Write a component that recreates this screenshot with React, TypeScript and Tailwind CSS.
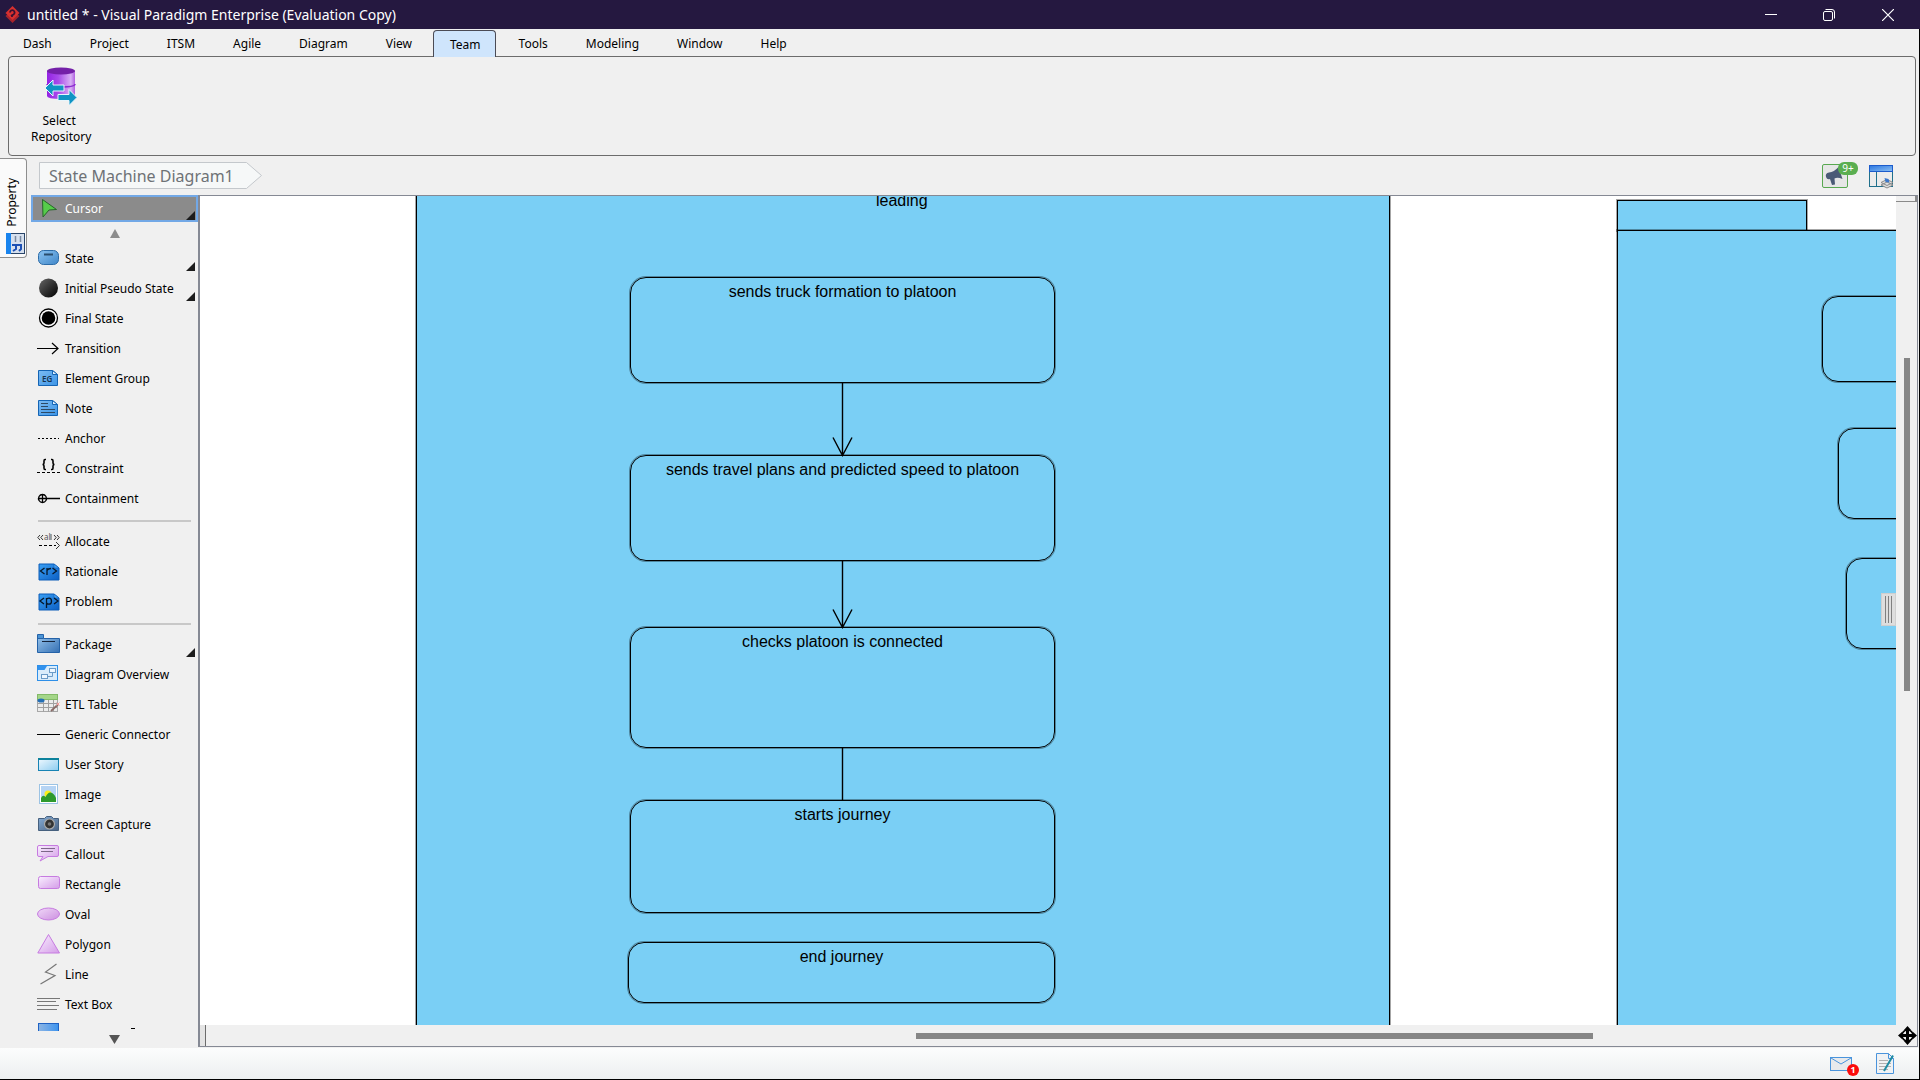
import type { ReactNode } from "react";

const menus = ["Dash", "Project", "ITSM", "Agile", "Diagram", "View", "Team", "Tools", "Modeling", "Window", "Help"];

function Svg({ children }: { children: ReactNode }) {
  return (
    <svg width="24" height="24" viewBox="0 0 24 24" fill="none" className="shrink-0" aria-hidden="true">
      {children}
    </svg>
  );
}

const icons: Record<string, ReactNode> = {
  State: (
    <>
      <rect x="1.500" y="3.500" width="20" height="14" rx="5" fill="url(#gState)" stroke="#2d6ca8" />
      <path d="M7 7.500h9" stroke="#2b4d6c" strokeWidth="2" />
    </>
  ),
  "Initial Pseudo State": <circle cx="11.500" cy="11" r="9.500" fill="url(#gBall)" />,
  "Final State": (
    <>
      <circle cx="11.500" cy="11" r="9" fill="#fff" stroke="#000" strokeWidth="1.300" />
      <circle cx="11.500" cy="11" r="6.800" fill="#000" />
    </>
  ),
  Transition: <path d="M0 11.500h21M15 6l6 5.500-6 5.500" stroke="#000" strokeWidth="1.200" />,
  "Element Group": (
    <>
      <path d="M1.500 3.500h14l5 4v11h-19z" fill="url(#gNote)" stroke="#1464b4" />
      <path d="M15.500 3.500v4h5z" fill="#dceeff" stroke="#1464b4" />
      <text x="5" y="15" fontSize="8" fontWeight="600" fontFamily="Noto Sans" fill="#16324e">EG</text>
    </>
  ),
  Note: (
    <>
      <path d="M1.500 3.500h14l5 4v11h-19z" fill="url(#gNote)" stroke="#1464b4" />
      <path d="M15.500 3.500v4h5z" fill="#dceeff" stroke="#1464b4" />
      <path d="M4 6.500h7M4 9.500h7M4 12.500h14M4 15.500h14" stroke="#2d4a66" />
    </>
  ),
  Anchor: <path d="M1 11.500h21" stroke="#000" strokeDasharray="2 2" />,
  Constraint: (
    <>
      <path d="M9 2.500H8q-1 0-1 1.500v2q0 1.500-1.500 1.500Q7 7.500 7 9v2q0 1.500 1 1.500h1M14 2.500h1q1 0 1 1.500v2q0 1.500 1.500 1.500Q16 7.500 16 9v2q0 1.500-1 1.500h-1" stroke="#000" strokeWidth="1.600" />
      <path d="M0 15.500h23" stroke="#000" strokeDasharray="3 2" />
    </>
  ),
  Containment: <path d="M5.500 7.500a4 4 0 1 0 .01 0M5.500 7.500v8M1.500 11.500H23" stroke="#000" strokeWidth="1.300" />,
  Allocate: (
    <>
      <path d="M3 5L.8 7.500 3 10M6 5L3.800 7.500 6 10M17 5l2.200 2.500L17 10M20 5l2.200 2.500L20 10" stroke="#333" />
      <text x="7" y="10" fontSize="8" fontFamily="Noto Sans" fill="#555">al</text>
      <path d="M14 4v6" stroke="#555" />
      <path d="M2 15.500h17" stroke="#000" strokeDasharray="3 2" />
      <path d="M19 12l3.500 3.500L19 19" stroke="#333" />
    </>
  ),
  Rationale: (
    <>
      <path d="M2 4h15l5 4v12H2z" fill="url(#gDeep)" stroke="#0d5cb8" />
      <path d="M17 4v4h5z" fill="#4aa3ef" stroke="#0d5cb8" strokeWidth=".6" />
      <path d="M7.500 8l-4 3 4 3M15.500 8l4 3-4 3M10 15V8M10 10.500Q11 8.500 14 8.500" stroke="#06182c" strokeWidth="1.300" />
    </>
  ),
  Problem: (
    <>
      <path d="M2 4h15l5 4v12H2z" fill="url(#gDeep)" stroke="#0d5cb8" />
      <path d="M17 4v4h5z" fill="#4aa3ef" stroke="#0d5cb8" strokeWidth=".6" />
      <path d="M7 8l-4 3 4 3M17 8l4 3-4 3M9.500 18V8M9.500 9.500Q10 8.200 12 8.200q2.500 0 2.500 3t-2.500 3q-2 0-2.500-1.500" stroke="#06182c" strokeWidth="1.300" />
    </>
  ),
  Package: (
    <>
      <path d="M.5 1.500h6v4h16v14H.5z" fill="url(#gPkg)" stroke="#2462a8" />
      <path d="M1 2h5v3.500H1z" fill="#4c94d4" />
      <path d="M.5 5.500h6" stroke="#2462a8" />
      <path d="M5 8.500h13" stroke="#14243c" />
    </>
  ),
  "Diagram Overview": (
    <>
      <rect x=".5" y="2.500" width="20" height="15" fill="#d9ecfb" stroke="#2e8fe8" />
      <path d="M1 3h9L7.500 7H1z" fill="#3192ee" />
      <rect x="12.500" y="5.500" width="6" height="4" fill="#eef7ff" stroke="#6c9cc8" />
      <rect x="4.500" y="11.500" width="6" height="4" fill="#eef7ff" stroke="#6c9cc8" />
      <path d="M11 13.500h4.500v-4" stroke="#6c9cc8" />
    </>
  ),
  "ETL Table": (
    <>
      <rect x=".5" y="1.500" width="20" height="17" fill="#ececec" stroke="#a8a8a8" />
      <rect x=".5" y="1.500" width="20" height="5" fill="#a4d688" stroke="#83ba68" />
      <path d="M1 10.500h19M1 14.500h19M6.500 7v12M11.500 7v12M16.500 7v12" stroke="#a0a0a0" />
      <ellipse cx="4" cy="7.500" rx="3.500" ry="2" fill="#256fb5" />
      <path d="M14 18l7-6.500" stroke="#896b67" strokeWidth="1.800" />
      <path d="M19.500 9.500l3 3M22.500 9.500l-3 3" stroke="#f09a9a" />
    </>
  ),
  "Generic Connector": <path d="M0 11.500h23" stroke="#000" />,
  "User Story": (
    <>
      <rect x="1.500" y="5.500" width="20" height="12" fill="url(#gStory)" stroke="#1883b4" />
      <path d="M1 6h21" stroke="#0d829c" strokeWidth="2" />
    </>
  ),
  Image: (
    <>
      <rect x="2.500" y="1.500" width="18" height="19" fill="#fff" stroke="#9cc3e4" />
      <rect x="4" y="3" width="15" height="16" fill="#b6d4f4" />
      <circle cx="11" cy="11" r="3.500" fill="#fbef1c" />
      <path d="M4 19v-4q2-4 4.500-1Q11 9 13.500 9.500 17 10 19 15v4z" fill="#2e9a2c" />
    </>
  ),
  "Screen Capture": (
    <>
      <path d="M1.500 5.500h6l2-2h5l2 2h5v12h-20z" fill="url(#gCam)" stroke="#46607e" />
      <circle cx="12.500" cy="11" r="5" fill="#333" stroke="#aaa" strokeWidth="1.200" />
      <circle cx="12.500" cy="11" r="1.800" fill="#777" />
    </>
  ),
  Callout: (
    <>
      <path d="M2 2.500h18q1.500 0 1.500 1.500v8q0 1.500-1.500 1.500h-9L3 18l3-4.500H2Q.5 13.500.5 12V4Q.5 2.500 2 2.500z" fill="url(#gPink)" stroke="#c67be0" />
      <path d="M4 5.500h14M4 8.500h12" stroke="#7d6688" />
    </>
  ),
  Rectangle: <rect x="1.500" y="3.500" width="21" height="12" rx="2" fill="url(#gPink)" stroke="#c67be0" />,
  Oval: <ellipse cx="11.500" cy="11" rx="11" ry="6" fill="url(#gOval)" stroke="#c67be0" />,
  Polygon: <path d="M11.500 1.500l11 18.500H.8z" fill="url(#gPink)" stroke="#c67be0" />,
  Line: <path d="M19.500 1L8.500 9l9.500 3.500L3.500 21" stroke="#777" strokeWidth="1.200" />,
  "Text Box": <path d="M0 5.500h23M0 8.500h19M0 12.500h22M0 16.500h20" stroke="#777" />,
};

const groups: { name: string; more?: boolean }[][] = [
  [
    { name: "State", more: true },
    { name: "Initial Pseudo State", more: true },
    { name: "Final State" },
    { name: "Transition" },
    { name: "Element Group" },
    { name: "Note" },
    { name: "Anchor" },
    { name: "Constraint" },
    { name: "Containment" },
  ],
  [{ name: "Allocate" }, { name: "Rationale" }, { name: "Problem" }],
  [
    { name: "Package", more: true },
    { name: "Diagram Overview" },
    { name: "ETL Table" },
    { name: "Generic Connector" },
    { name: "User Story" },
    { name: "Image" },
    { name: "Screen Capture" },
    { name: "Callout" },
    { name: "Rectangle" },
    { name: "Oval" },
    { name: "Polygon" },
    { name: "Line" },
    { name: "Text Box" },
  ],
];

function Gradients() {
  const list: [string, string, string][] = [
    ["gState", "#8cc4f2", "#3f86c8"],
    ["gBall", "#666666", "#000000"],
    ["gNote", "#7cbcf4", "#3c94e6"],
    ["gDeep", "#3aa0f4", "#0c5fc4"],
    ["gPkg", "#9cc8ee", "#3470b4"],
    ["gStory", "#f0f9ff", "#8cccf0"],
    ["gCam", "#86aed8", "#4c6484"],
    ["gPink", "#faf0ff", "#d49ce8"],
    ["gOval", "#f0d8f8", "#cc90e0"],
    ["gBar", "#2a76e0", "#8cc0f4"],
  ];
  return (
    <svg className="absolute size-0" aria-hidden="true">
      <defs>
        {list.map(([id, from, to]) => (
          <linearGradient key={id} id={id} x1="0" y1="0" x2="1" y2="1">
            <stop offset="0" stopColor={from} />
            <stop offset="1" stopColor={to} />
          </linearGradient>
        ))}
        <linearGradient id="gDb" x1="0" x2="1">
          <stop offset="0" stopColor="#9422e4" />
          <stop offset=".4" stopColor="#a84aea" />
          <stop offset=".85" stopColor="#d8b0f4" />
          <stop offset="1" stopColor="#b060e0" />
        </linearGradient>
      </defs>
    </svg>
  );
}

function Corner({ place }: { place: string }) {
  return (
    <svg width="9" height="9" viewBox="0 0 9 9" className={"absolute " + place} aria-hidden="true">
      <path d="M9 0v9H0z" fill="#1c1c1c" />
    </svg>
  );
}

function TitleBar() {
  return (
    <header className="flex h-[29px] shrink-0 items-center bg-[#251840] pl-[5px] text-white">
      <svg width="15" height="17" viewBox="0 0 15 17" aria-hidden="true">
        <path d="M7.500 4l7 6-7 7-7-7z" fill="#a8242c" />
        <path d="M7.500 0l7 7-7 7-7-7z" fill="#d8302f" />
        <path d="M7 11V8.500M5 6.500a2.300 2.300 0 1 1 3.500 2L6 10" stroke="#3a1230" strokeWidth="1.800" fill="none" />
      </svg>
      <h1 className="ml-[7px] flex-1 text-sm">untitled * - Visual Paradigm Enterprise (Evaluation Copy)</h1>
      <button aria-label="Minimize" className="flex h-full w-[58px] items-center justify-center">
        <svg width="12" height="12" viewBox="0 0 12 12"><path d="M0 5.500h12" stroke="#fff" /></svg>
      </button>
      <button aria-label="Restore" className="flex h-full w-[58px] items-center justify-center">
        <svg width="12" height="12" viewBox="0 0 12 12" fill="none" stroke="#fff">
          <rect x=".5" y="2.500" width="9" height="9" rx="1.500" />
          <path d="M2.500.5H9q2.500 0 2.500 2.500v6.500" />
        </svg>
      </button>
      <button aria-label="Close" className="flex h-full w-[60px] items-center justify-center">
        <svg width="12" height="12" viewBox="0 0 12 12"><path d="M0 0l12 12M12 0L0 12" stroke="#fff" strokeWidth="1.200" /></svg>
      </button>
      <div className="w-[2px]" />
    </header>
  );
}

function Ribbon() {
  return (
    <>
      <nav className="flex h-[27px] shrink-0 items-end gap-[6px] pl-[6px]">
        {menus.map((m) =>
          m === "Team" ? (
            <button key={m} className="relative z-10 -mb-px h-[27px] rounded-t-sm border border-b-0 border-[#4b4b55] bg-[#cfe5fc] pt-[2px] pr-[14px] pl-4">
              {m}
            </button>
          ) : (
            <button key={m} className="h-[26px] border border-transparent pt-[2px] pr-[14px] pl-4">
              {m}
            </button>
          ),
        )}
      </nav>
      <section aria-label="Team" className="mr-[3px] ml-2 flex h-[100px] shrink-0 items-start rounded border border-[#6c6c6c] pt-2 pl-[22px]">
        <button className="flex flex-col items-center text-center leading-4">
          <svg width="34" height="40" viewBox="0 0 34 40" className="mb-2" aria-hidden="true">
            <path d="M3 6v25q0 3 14 3t14-3V6z" fill="url(#gDb)" />
            <ellipse cx="17" cy="6" rx="14" ry="3.500" fill="#7420a8" />
            <path d="M3 19q0 3 14 3t14-3" stroke="#8c2cd0" fill="none" strokeWidth="1.500" />
            <path d="M1 23l8-8v5h11v6H9v5z" fill="#1094c4" stroke="#e8f6fc" />
            <path d="M33 32.500l-8-8v5H14v6h11v5z" fill="#1094c4" stroke="#e8f6fc" />
          </svg>
          <span className="pr-1">Select</span>
          <span>Repository</span>
        </button>
      </section>
    </>
  );
}

function Palette() {
  return (
    <aside aria-label="Diagram palette" className="flex w-[167px] shrink-0 flex-col">
      <button className="relative flex h-[27px] shrink-0 items-center border-2 border-[#72a8e6] bg-[#8b8b8b] pl-1 text-white">
        <Svg>
          <path d="M5.500 2.500l14 10-7.500.5-6 7z" fill="#56cc4a" stroke="#27662a" />
        </Svg>
        <span className="ml-1">Cursor</span>
        <Corner place="right-px bottom-0" />
      </button>
      <button aria-label="Scroll up" className="flex h-[22px] shrink-0 items-center justify-center">
        <svg width="10" height="9" viewBox="0 0 10 9"><path d="M5 0l5 9H0z" fill="#8c8c8c" /></svg>
      </button>
      <div className="min-h-0 flex-1 overflow-hidden">
        {groups.map((g, i) => (
          <div key={i}>
            {i > 0 && (
              <div className="flex h-[13px] items-center">
                <hr className="mx-[7px] flex-1 border-t-2 border-[#c8c8c8]" />
              </div>
            )}
            {g.map((it) => (
              <button key={it.name} className="relative flex h-[30px] w-full items-center pl-[6px] text-left">
                <Svg>{icons[it.name]}</Svg>
                <span className="ml-1">{it.name}</span>
                {it.more && <Corner place="right-[3px] bottom-[3px]" />}
              </button>
            ))}
          </div>
        ))}
        <div className="flex items-start pt-[3px] pl-[7px]">
          <div className="h-5 w-[21px] border border-[#1f62c4] bg-linear-to-r from-[#8ab4e4] to-[#3c94ee]" />
          <div className="mt-[5px] ml-[72px] h-px w-1 bg-black" />
        </div>
      </div>
      <button aria-label="Scroll down" className="flex h-4 shrink-0 items-center justify-center">
        <svg width="11" height="9" viewBox="0 0 11 9"><path d="M0 0h11L5.500 9z" fill="#555" /></svg>
      </button>
    </aside>
  );
}

const line = "absolute border border-black shadow-[0_0_0_1px_rgba(0,0,0,0.35)]";

const states = [
  { text: "sends truck formation to platoon", pos: "left-[430px] top-[81px] h-[106px] w-[425px]" },
  { text: "sends travel plans and predicted speed to platoon", pos: "left-[430px] top-[259px] h-[106px] w-[425px]" },
  { text: "checks platoon is connected", pos: "left-[430px] top-[431px] h-[121px] w-[425px]" },
  { text: "starts journey", pos: "left-[430px] top-[604px] h-[113px] w-[425px]" },
  { text: "end journey", pos: "left-[428px] top-[746px] h-[61px] w-[427px]" },
  { text: "", pos: "left-[1622px] top-[100px] h-[86px] w-[425px]" },
  { text: "", pos: "left-[1638px] top-[232px] h-[91px] w-[425px]" },
  { text: "", pos: "left-[1646px] top-[362px] h-[91px] w-[425px]" },
];

function Canvas() {
  return (
    <main className="relative min-w-0 flex-1 overflow-hidden bg-white font-['Liberation_Sans',sans-serif] text-base text-black">
      <div className={line + " -top-10 left-[216px] h-[900px] w-[974px] bg-[#7acff5]"} />
      <div className={line + " top-[4px] left-[1417px] h-[31px] w-[190px] bg-[#7acff5]"} />
      <div className={line + " top-[34px] left-[1417px] h-[900px] w-[600px] bg-[#7acff5]"} />
      <p className="absolute -top-[5px] left-[676px] leading-5">leading</p>
      {states.map((s, i) => (
        <div key={i} className={line + " rounded-2xl pt-1 text-center leading-5 " + s.pos}>
          {s.text}
        </div>
      ))}
      <svg width="30" height="460" viewBox="0 0 30 460" fill="none" stroke="#000" strokeWidth="1.400" className="absolute top-[180px] left-[628px]" aria-hidden="true">
        <path d="M14.500 7v72M5 61.500l9.500 18 9.500-18M14.500 185v66M5 233.500l9.500 18 9.500-18M14.500 372v53" />
      </svg>
      <button aria-label="Open side panel" className="absolute top-[397px] right-0 flex h-[33px] w-[15px] justify-center gap-[2px] border border-[#cfcfcf] bg-[#dedede] py-[2px]">
        <span className="w-px bg-[#808080]" />
        <span className="w-px bg-[#808080]" />
        <span className="w-px bg-[#808080]" />
      </button>
    </main>
  );
}

function Breadcrumb() {
  return (
    <div className="flex h-[39px] shrink-0 items-center pr-6">
      <button className="relative ml-2 flex h-[27px] w-[223px] items-center pl-[10px] text-base text-[#6e7276]">
        <svg width="223" height="27" viewBox="0 0 223 27" className="absolute top-0 left-0" aria-hidden="true">
          <path d="M.5.500h207l15 13-15 13H.5z" fill="#f6f8f8" stroke="#c4c8cc" />
        </svg>
        <span className="relative">State Machine Diagram1</span>
      </button>
      <div className="flex-1" />
      <button aria-label="Announcements" className="relative mr-[11px] h-[26px] w-9">
        <svg width="36" height="26" viewBox="0 0 36 26" aria-hidden="true">
          <rect x=".5" y="1.500" width="25" height="23" rx="1.500" fill="#e6e6e6" stroke="#58a850" />
          <path d="M4 14q-1-4 3-4.500 5-.5 9.500-5.500l4 12q-5-2-8-.500l.5 6-3 .5-2-6Q5 17 4 14z" fill="#4a5a76" />
        </svg>
        <span className="absolute -top-px left-4 flex h-[13px] w-5 items-center justify-center rounded-md bg-[#5aae50] text-[10px] leading-none text-white">9+</span>
      </button>
      <button aria-label="Panels">
        <svg width="26" height="26" viewBox="0 0 26 26" fill="none" aria-hidden="true">
          <rect x=".5" y="2.500" width="23" height="21" fill="#ececec" stroke="#20708c" />
          <rect x=".5" y="2.500" width="23" height="6" fill="url(#gBar)" stroke="#1c5ccc" />
          <path d="M7.500 9v14" stroke="#20708c" />
          <path d="M12 22l6-3 6 3-6 3zM12 19.500l6-3 6 3-6 3z" fill="#e0e0e0" stroke="#8a8a8a" />
          <path d="M15.500 15l4 1 1 3.500-4-.5z" fill="#3c78cc" />
        </svg>
      </button>
    </div>
  );
}

export default function App() {
  return (
    <div className="flex h-screen flex-col overflow-hidden border-b border-black bg-[#f0f0f0] font-['Noto_Sans',sans-serif] text-xs text-black">
      <Gradients />
      <TitleBar />
      <div className="flex min-h-0 flex-1 flex-col border-r border-black">
        <Ribbon />
        <div className="flex min-h-0 flex-1">
          <div className="w-[31px] shrink-0 pt-[2px]">
            <button className="flex h-[100px] w-[27px] flex-col items-center justify-end rounded-r border border-l-0 border-[#8e8e8e] bg-[#fafafa] pb-[3px]">
              <span className="mr-[3px] mb-[6px] rotate-180 [writing-mode:vertical-rl]">Property</span>
              <svg width="19" height="21" viewBox="0 0 19 21" className="ml-1 shrink-0" aria-hidden="true">
                <rect x=".5" y=".5" width="18" height="20" fill="#d6e0ee" stroke="#284468" />
                <path d="M0 0h5v21H0z" fill="#1a84ee" />
                <path d="M9.500 3v6M14.500 3v6" stroke="#7888a0" strokeWidth="1.500" />
                <path d="M6 12h4v4l-3 2M11 12h4v4l-2 2" stroke="#1c50b4" strokeWidth="2" fill="none" />
              </svg>
            </button>
          </div>
          <div className="flex min-w-0 flex-1 flex-col">
            <Breadcrumb />
            <div className="flex min-h-0 flex-1 pb-px">
              <Palette />
              <div className="mr-px flex min-w-0 flex-1 flex-col border border-l-2 border-[#858994]">
                <div className="flex min-h-0 flex-1">
                  <Canvas />
                  <div className="flex w-[21px] shrink-0 flex-col items-center">
                    <div className="mb-[156px] h-[6px] w-full border-r-2 border-b border-[#8a8a8a]" />
                    <div className="h-[333px] w-[6px] bg-[#868686]" />
                  </div>
                </div>
                <div className="flex h-[21px] shrink-0 items-center">
                  <div className="h-full w-[6px] border-r border-[#6c6c6c] bg-[#e4e4e4]" />
                  <div className="flex-[710]" />
                  <div className="h-[6px] flex-[678] bg-[#868686]" />
                  <div className="flex-[305]" />
                  <svg width="19" height="19" viewBox="0 0 19 19" className="shrink-0" aria-hidden="true">
                    <path d="M9.500 0l4 4.500h-2.500V8h3.500V5.500L19 9.500l-4.500 4V11H11v3.500h2.500L9.500 19l-4-4.500H8V11H4.500v2.500L0 9.500l4.500-4V8H8V4.500H5.500z" fill="#000" />
                    <circle cx="9.500" cy="9.500" r="5.500" stroke="#000" strokeWidth="1.500" fill="none" />
                  </svg>
                </div>
              </div>
            </div>
          </div>
        </div>
        <footer className="flex h-[31px] shrink-0 items-center justify-end bg-linear-to-b from-[#fcfdfd] to-[#eceff0] pr-[24px]">
          <button aria-label="Messages, 1 unread" className="relative mr-[15px] h-5 w-[31px]">
            <svg width="23" height="15" viewBox="0 0 23 15" fill="none" className="absolute top-[3px] left-0" aria-hidden="true">
              <rect x=".5" y=".5" width="21" height="13" fill="#e8eaec" stroke="#4a94dc" />
              <path d="M1 1l10 6 10-6" stroke="#4a94dc" />
            </svg>
            <span className="absolute top-[10px] left-[17px] flex size-3 items-center justify-center rounded-full bg-[#fa0c0c] text-[9px] font-bold leading-none text-white">1</span>
          </button>
          <button aria-label="Edit document">
            <svg width="19" height="22" viewBox="0 0 19 22" fill="none" aria-hidden="true">
              <path d="M.5.500h12l5 5v15H.5z" fill="#f0f2f4" stroke="#4a94dc" />
              <path d="M12.500.5v5h5" stroke="#4a94dc" />
              <path d="M3 7.500h9M3 10.500h12M3 13.500h12M3 16.500h9" stroke="#b0b0b0" />
              <path d="M17 2.500L8 18" stroke="#208ca4" strokeWidth="2" />
            </svg>
          </button>
        </footer>
      </div>
    </div>
  );
}
